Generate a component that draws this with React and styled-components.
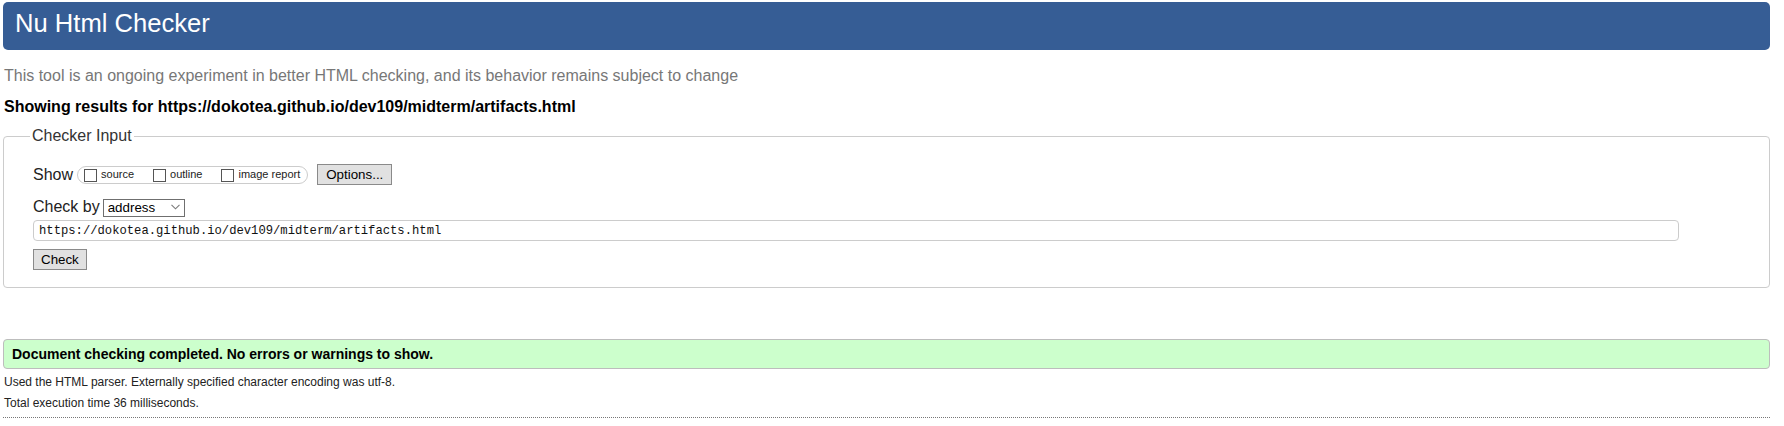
import React from "react";
import styled, { createGlobalStyle } from "styled-components";

const GlobalStyle = createGlobalStyle`
  html, body { margin: 0; padding: 0; background: #ffffff; }
  body {
    font-family: "Liberation Sans", Arial, Helvetica, sans-serif;
    font-size: 16px;
    color: #000;
  }
  * { box-sizing: border-box; }
`;

const Page = styled.div`
  padding: 2px 14px 0 3px;
`;

const Title = styled.h1`
  margin: 0;
  height: 48px;
  padding: 7px 12px 0;
  background: #365d95;
  color: #ffffff;
  border-radius: 5px;
  font-size: 25.6px;
  font-weight: normal;
  line-height: 29px;
`;

const Intro = styled.p`
  margin: 17px 0 0 1px;
  color: #777777;
  font-size: 16px;
  line-height: 18.4px;
`;

const ResultsFor = styled.p`
  margin: 13px 0 0 1px;
  font-weight: bold;
  font-size: 16px;
  line-height: 18.4px;
`;

const InputSet = styled.fieldset`
  margin: 10.6px 0 0;
  padding: 18.6px 90px 17px 29px;
  border: 1px solid #cccccc;
  border-radius: 4px;
  min-width: 0;
`;

const Legend = styled.legend`
  margin-left: -3px;
  padding: 0 2px;
  color: #333333;
  font-size: 16px;
  line-height: 18.4px;
`;

const Stack = styled.div`
  display: flex;
  flex-direction: column;
  align-items: flex-start;
`;

const Row = styled.div`
  display: flex;
  align-items: center;
  margin-top: ${(p) => p.$top || 0}px;
  height: ${(p) => p.$h}px;
`;

const RowLabel = styled.span`
  font-size: 16px;
  line-height: 18.4px;
  color: #222222;
  margin-right: ${(p) => p.$gap}px;
`;

const ShowGroup = styled.div`
  display: flex;
  align-items: center;
  gap: 19px;
  height: 18px;
  padding: 0 7px 0 6px;
  border: 1px solid #cccccc;
  border-radius: 9px;
  margin-right: 9px;
`;

const Option = styled.label`
  display: flex;
  align-items: center;
  gap: 4px;
  font-size: 11px;
  color: #222222;
  line-height: 13px;
`;

const Box = styled.span`
  display: inline-block;
  width: 13px;
  height: 13px;
  border: 1px solid #555555;
  background: #ffffff;
  margin-top: 1px;
`;

const Button = styled.button`
  height: 21px;
  padding: 0 ${(p) => p.$pad}px;
  margin-top: ${(p) => p.$top || 0}px;
  font-family: "Liberation Sans", Arial, sans-serif;
  font-size: 13.33px;
  color: #000000;
  background: #e1e1e1;
  border: 1px solid #8a8a8a;
  border-radius: 0;
  line-height: 19px;
`;

const SelectWrap = styled.div`
  position: relative;
  width: 82px;
  height: 18px;
`;

const Select = styled.select`
  appearance: none;
  -webkit-appearance: none;
  width: 100%;
  height: 100%;
  padding: 0 0 0 4px;
  font-family: "Liberation Sans", Arial, sans-serif;
  font-size: 13.33px;
  color: #000000;
  background: #ffffff;
  border: 1px solid #6f6f6f;
  border-radius: 0;
  line-height: 16px;
`;

const Chevron = styled.svg`
  position: absolute;
  right: 5px;
  top: 6px;
  width: 9px;
  height: 6px;
  pointer-events: none;
`;

const UrlInput = styled.input`
  margin-top: 4px;
  width: 100%;
  height: 21px;
  padding: 0 5px;
  font-family: "Liberation Mono", "DejaVu Sans Mono", monospace;
  font-size: 12.2px;
  color: #111111;
  border: 1px solid #cccccc;
  border-radius: 4px;
  background: #ffffff;
`;

const Success = styled.div`
  margin-top: 51px;
  height: 30px;
  display: flex;
  align-items: center;
  padding: 0 8px;
  background: #ccffcc;
  border: 1px solid #bdbdbd;
  border-radius: 4px;
  font-weight: bold;
  font-size: 14px;
  color: #000000;
`;

const Detail = styled.p`
  margin: 7px 0 0 1px;
  font-size: 12px;
  line-height: 13.8px;
  color: #222222;
`;

const Rule = styled.hr`
  margin: 6px 0 0;
  border: 0;
  border-top: 1px dotted #777777;
  height: 0;
`;

const options = ["source", "outline", "image report"];
const url = "https://dokotea.github.io/dev109/midterm/artifacts.html";

export default function App() {
  return (
    <>
      <GlobalStyle />
      <Page>
        <Title>Nu Html Checker</Title>
        <Intro>
          This tool is an ongoing experiment in better HTML checking, and its
          behavior remains subject to change
        </Intro>
        <ResultsFor>Showing results for {url}</ResultsFor>
        <InputSet>
          <Legend>Checker Input</Legend>
          <Stack>
            <Row $h={21}>
              <RowLabel $gap={4}>Show</RowLabel>
              <ShowGroup>
                {options.map((o) => (
                  <Option key={o}>
                    <Box />
                    {o}
                  </Option>
                ))}
              </ShowGroup>
              <Button $pad={8}>Options...</Button>
            </Row>
            <Row $top={12} $h={19}>
              <RowLabel $gap={3}>Check by</RowLabel>
              <SelectWrap>
                <Select defaultValue="address">
                  <option value="address">address</option>
                  <option value="file">file upload</option>
                  <option value="text">text input</option>
                </Select>
                <Chevron viewBox="0 0 9 6">
                  <path d="M0.5 0.8 L4.5 4.8 L8.5 0.8" fill="none" stroke="#7a7a7a" strokeWidth="1.1" />
                </Chevron>
              </SelectWrap>
            </Row>
            <UrlInput type="url" defaultValue={url} readOnly />
            <Button $pad={7} $top={8}>Check</Button>
          </Stack>
        </InputSet>
        <Success>Document checking completed. No errors or warnings to show.</Success>
        <Detail>Used the HTML parser. Externally specified character encoding was utf-8.</Detail>
        <Detail>Total execution time 36 milliseconds.</Detail>
        <Rule />
      </Page>
    </>
  );
}
